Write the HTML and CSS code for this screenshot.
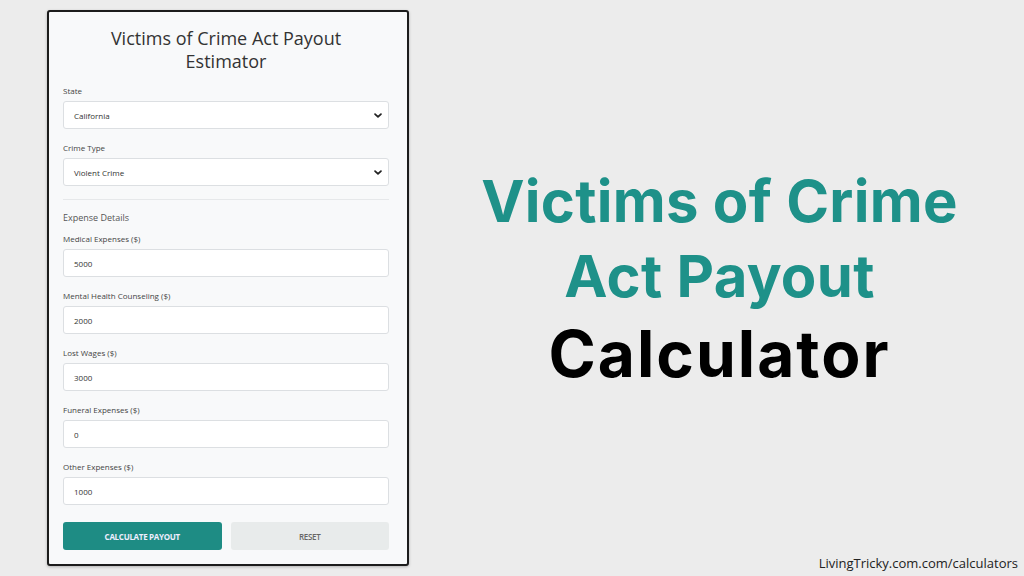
FILE: index.html
```html
<!DOCTYPE html>
<html lang="en">
<head>
<meta charset="utf-8">
<title>Victims of Crime Act Payout Calculator</title>
<link rel="stylesheet" href="styles.css">
</head>
<body>
<div class="page">
  <form class="card">
    <h1 class="card-title">Victims of Crime Act Payout Estimator</h1>

    <div class="field">
      <label class="label">State</label>
      <div class="select">
        <span>California</span>
        <svg class="chev" viewBox="0 0 10 6" width="8" height="5"><path d="M1.3 1.2l3.7 3.5 3.7-3.5" fill="none" stroke="#222" stroke-width="2.2" stroke-linecap="round" stroke-linejoin="round"/></svg>
      </div>
    </div>

    <div class="field">
      <label class="label">Crime Type</label>
      <div class="select">
        <span>Violent Crime</span>
        <svg class="chev" viewBox="0 0 10 6" width="8" height="5"><path d="M1.3 1.2l3.7 3.5 3.7-3.5" fill="none" stroke="#222" stroke-width="2.2" stroke-linecap="round" stroke-linejoin="round"/></svg>
      </div>
    </div>

    <hr class="divider">

    <h2 class="section">Expense Details</h2>

    <div class="field tight">
      <label class="label">Medical Expenses ($)</label>
      <div class="input">5000</div>
    </div>
    <div class="field">
      <label class="label">Mental Health Counseling ($)</label>
      <div class="input">2000</div>
    </div>
    <div class="field">
      <label class="label">Lost Wages ($)</label>
      <div class="input">3000</div>
    </div>
    <div class="field">
      <label class="label">Funeral Expenses ($)</label>
      <div class="input">0</div>
    </div>
    <div class="field">
      <label class="label">Other Expenses ($)</label>
      <div class="input">1000</div>
    </div>

    <div class="actions">
      <button type="button" class="btn primary">CALCULATE PAYOUT</button>
      <button type="button" class="btn secondary">RESET</button>
    </div>
  </form>

  <section class="hero">
    <div class="hero-line teal">Victims of Crime</div>
    <div class="hero-line teal">Act Payout</div>
    <div class="hero-line black">Calculator</div>
  </section>
</div>
<div class="footer">LivingTricky.com.com/calculators</div>
</body>
</html>
```

FILE: styles.css
```css
* { box-sizing: border-box; }

html, body {
  margin: 0;
  padding: 0;
}

body {
  width: 1024px;
  height: 576px;
  background: #ececec;
  font-family: "Open Sans", "Noto Sans", sans-serif;
  position: relative;
  overflow: hidden;
}

.page {
  display: flex;
  align-items: flex-start;
}

/* form card */
.card {
  margin: 10px 0 0 47px;
  width: 362px;
  height: 556px;
  background: #f8f9fa;
  border: 2px solid #1c1c1c;
  border-radius: 3px;
  padding: 15px 18px 0 14px;
  box-shadow: 0 1px 3px rgba(0,0,0,0.25);
}

.card-title {
  margin: 0 auto 13px;
  max-width: 270px;
  text-align: center;
  font-weight: 400;
  font-size: 18px;
  line-height: 23px;
  color: #333;
}

.field {
  margin-top: 14px;
}
.field:first-of-type { margin-top: 0; }
.field.tight { margin-top: 10px; }

.label {
  display: block;
  font-size: 8px;
  line-height: 10px;
  color: #444;
  margin-bottom: 5px;
}

.select,
.input {
  height: 28px;
  background: #fff;
  border: 1px solid #dcdfe2;
  border-radius: 3px;
  padding: 0 10px;
  display: flex;
  align-items: center;
  font-size: 8px;
  color: #333;
}

.select {
  justify-content: space-between;
  padding-right: 6px;
}

.chev { display: block; }

.divider {
  border: 0;
  border-top: 1px solid #e6e8ea;
  margin: 13px 0 0;
}

.section {
  margin: 12px 0 0;
  font-size: 9px;
  line-height: 12px;
  font-weight: 400;
  color: #555;
}

.actions {
  display: grid;
  grid-template-columns: 1fr 1fr;
  gap: 9px;
  margin-top: 17px;
}

.btn {
  height: 28px;
  border: 0;
  border-radius: 3px;
  font-family: inherit;
  font-size: 8px;
  font-weight: 700;
  letter-spacing: -0.3px;
  cursor: pointer;
}

.btn.primary {
  background: #1e8c84;
  color: #eef;
}

.btn.secondary {
  background: #e8ebeb;
  color: #666;
  font-weight: 600;
}

/* headline */
.hero {
  flex: 1;
  margin-top: 164px;
  text-align: center;
  padding-left: 6px;
}

.hero-line {
  font-family: "Inter", "DejaVu Sans", sans-serif;
  font-weight: 700;
  white-space: nowrap;
}

.hero-line.teal {
  color: #1e9189;
  font-size: 58px;
  line-height: 75px;
  letter-spacing: 0.3px;
}

.hero-line.black {
  color: #000;
  font-size: 64px;
  line-height: 80px;
  letter-spacing: 2px;
}

.footer {
  position: absolute;
  right: 6px;
  bottom: 4px;
  font-family: "Open Sans", "Noto Sans", sans-serif;
  font-size: 13px;
  color: #222;
}
```
